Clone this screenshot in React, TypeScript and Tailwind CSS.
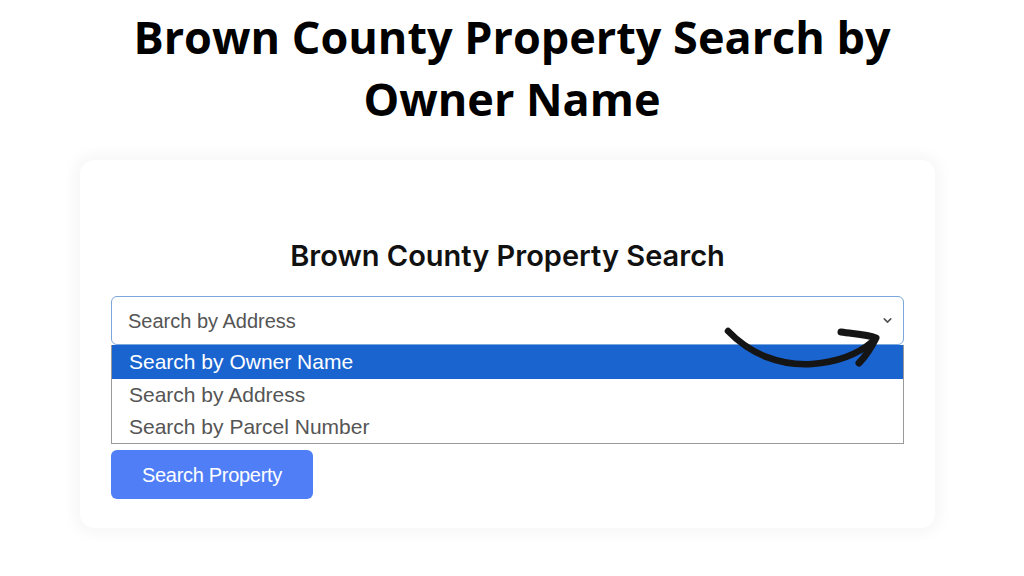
import { ChevronDown } from "lucide-react";

const OPTIONS = ["Search by Owner Name", "Search by Address", "Search by Parcel Number"];

function HandArrow() {
  // hand-drawn curved arrow pointing at the select chevron
  return (
    <svg
      className="absolute left-[720px] top-[322px] pointer-events-none"
      width="170"
      height="50"
      viewBox="0 0 170 50"
      fill="none"
    >
      <path
        d="M8 9 C 30 32, 60 44, 92 42 C 118 40, 138 32, 152 20"
        stroke="#151515"
        strokeWidth="6.5"
        strokeLinecap="round"
      />
      <path
        d="M121 10 C 134 12, 146 12, 156 16 C 151 26, 146 34, 139 41"
        stroke="#151515"
        strokeWidth="7"
        strokeLinecap="round"
        strokeLinejoin="round"
      />
    </svg>
  );
}

export default function App() {
  return (
    <div className="relative w-[1024px] h-[576px] bg-white overflow-hidden flex flex-col">
      <h1 className="mt-[6px] text-center text-[45px] leading-[62px] font-bold text-black font-['Open_Sans',sans-serif]">
        Brown County Property Search by
        <br />
        Owner Name
      </h1>

      <div className="mt-[30px] ml-[80px] w-[855px] h-[368px] rounded-[14px] bg-white shadow-[0_0_14px_6px_rgba(0,0,0,0.035)] px-[31px] pt-[76px]">
        <h2 className="text-center text-[29px] leading-[40px] font-semibold text-[#111] font-['Inter',sans-serif]">
          Brown County Property Search
        </h2>

        <div className="mt-[20px] font-['Liberation_Sans',Arial,sans-serif]">
          {/* select box */}
          <div className="h-[49px] flex items-center justify-between rounded-[6px] border border-[#7aa7dc] pl-[16px] pr-[9px] text-[20px] text-[#555]">
            <span>Search by Address</span>
            <ChevronDown size={13} strokeWidth={3} className="text-[#555]" />
          </div>

          {/* open option list */}
          <ul className="border border-[#9a9a9a] border-t-0 text-[21px] text-[#555]">
            {OPTIONS.map((opt, i) => (
              <li
                key={opt}
                className={`pl-[17px] ${i === 0 ? "bg-[#1a64d0] text-white h-[34px] leading-[34px]" : "h-[32px] leading-[32px]"}`}
              >
                {opt}
              </li>
            ))}
          </ul>

          <button className="mt-[6px] w-[202px] h-[49px] rounded-[6px] bg-[#4f7ef7] text-white text-[20px] tracking-[-0.3px]">
            Search Property
          </button>
        </div>
      </div>

      <HandArrow />
    </div>
  );
}
